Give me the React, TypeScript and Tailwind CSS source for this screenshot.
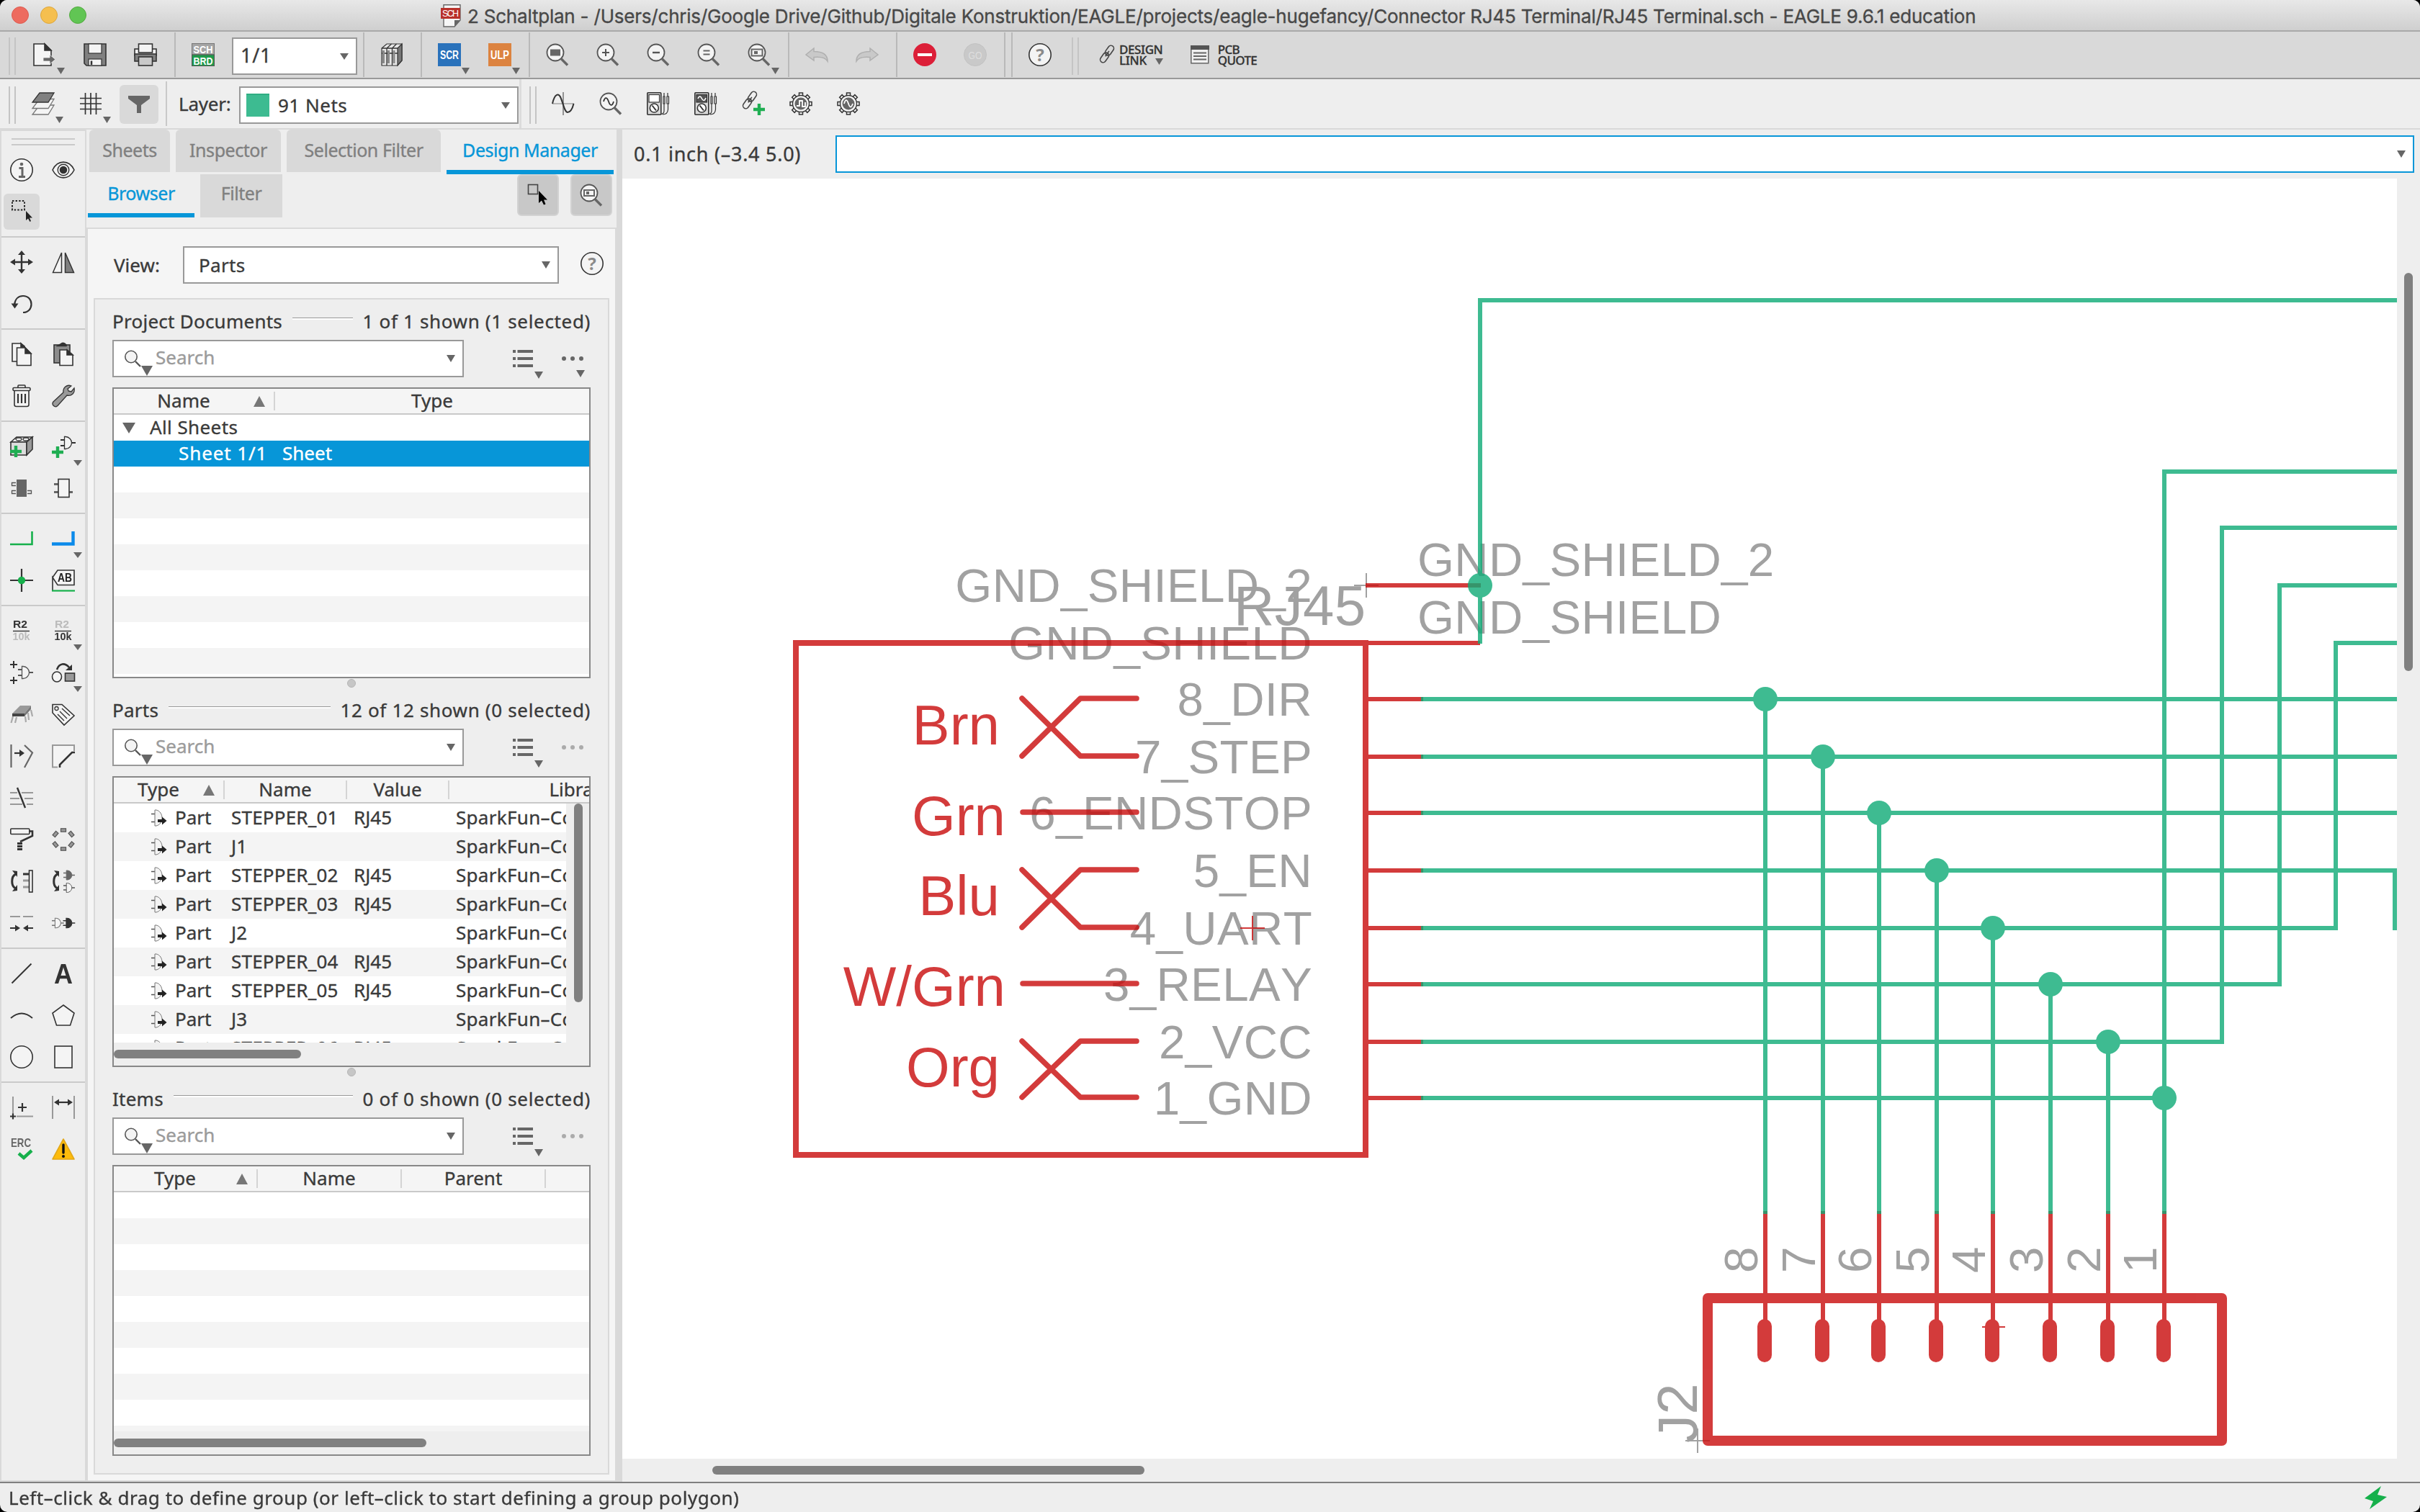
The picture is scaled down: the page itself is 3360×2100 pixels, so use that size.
import React from "react";

type Kids = { children?: React.ReactNode };

/* ---------- primitives ---------- */

function Ic({ children, className = "" }: Kids & { className?: string }) {
  return (
    <svg viewBox="0 0 32 32" fill="none" stroke="#333" strokeWidth="1.6" className={"block size-8 shrink-0 overflow-visible " + className}>
      {children}
    </svg>
  );
}

function Down({ className = "" }: { className?: string }) {
  return (
    <svg viewBox="0 0 12 10" preserveAspectRatio="none" className={"block shrink-0 " + className}>
      <path d="M0 0H12L6 10Z" fill="#666" />
    </svg>
  );
}

function Up() {
  return (
    <svg viewBox="0 0 16 15" className="block h-[15px] w-4 shrink-0">
      <path d="M0 15H16L8 0Z" fill="#777" />
    </svg>
  );
}

function Grip({ className = "" }: { className?: string }) {
  return <div className={"h-[52px] w-[10px] shrink-0 border-x-2 border-[#c4c4c4] " + className} />;
}

function Bar({ className = "" }: { className?: string }) {
  return <div className={"h-[62px] w-0.5 shrink-0 bg-[#b9b9b9] " + className} />;
}

function Tool({ children, menu, className = "" }: Kids & { menu?: boolean; className?: string }) {
  return (
    <div className={"relative size-8 shrink-0 " + className}>
      {children}
      {menu && <Down className="absolute top-[34px] left-[33px] h-[9px] w-[11px]" />}
    </div>
  );
}

/* ---------- shared icon parts ---------- */

function Lens({ children }: Kids) {
  return (
    <Ic>
      <circle cx="13" cy="13" r="11.5" fill="#f4f4f4" stroke="#555" strokeWidth="1.8" />
      <path d="M21 21.500L30 30.500" stroke="#666" strokeWidth="3.4" />
      {children}
    </Ic>
  );
}

function HelpGlyph() {
  return (
    <Ic>
      <circle cx="16" cy="16" r="15.2" fill="#f4f4f4" />
      <text x="16" y="24.500" fontSize="24" fontWeight="700" textAnchor="middle" fill="#8a8a8a" stroke="none" className="font-['Noto_Sans']">?</text>
    </Ic>
  );
}

function Gate({ x = 0, y = 0, fill = "#f4f4f4", s = "#333" }: { x?: number; y?: number; fill?: string; s?: string }) {
  return (
    <g transform={`translate(${x} ${y})`} stroke={s}>
      <path d="M0 -4H6M0 4H6M15 0H21" strokeWidth="1.800" />
      <path d="M5.500 -8.500H7C12 -8.500 15.500 -4 15.500 0S12 8.500 7 8.500H5.500Z" fill={fill} strokeWidth="1.300" />
    </g>
  );
}

function Plus({ x, y }: { x: number; y: number }) {
  return <path d={`M${x - 8} ${y}H${x + 8}M${x} ${y - 8}V${y + 8}`} stroke="#1fae52" strokeWidth="4.4" />;
}

function Chain() {
  return (
    <g stroke="#444" strokeWidth="1.600" transform="rotate(-55 11 11)">
      <rect x="-2.500" y="7" width="15" height="8" rx="4" />
      <rect x="9.500" y="7" width="15" height="8" rx="4" />
      <path d="M7 11H16" />
    </g>
  );
}

function Meter({ wave }: { wave?: boolean }) {
  return (
    <Ic>
      <rect x="0.8" y="0.8" width="19" height="30.400" rx="1" fill="#d8d8d8" />
      <rect x="3" y="3.500" width="14.500" height="10.500" fill={wave ? "#555" : "#fff"} strokeWidth="1.200" />
      {wave && <path d="M5 9C7 4 9 6 10.500 9S14 13 16 8" stroke="#fff" />}
      <circle cx="10.300" cy="22" r="6" fill="#fff" />
      <path d="M7.500 18.500L13 25.500" strokeWidth="2" />
      <path d="M24 1V6M29 1V6M23 6H25V16H23ZM28 6H30.500V16H28ZM24 16V26Q24 30 20 30.500M29.500 16V24Q29 31 22 31" strokeWidth="1.200" />
    </Ic>
  );
}

function Gear({ children }: Kids) {
  return (
    <Ic>
      {[0, 45, 90, 135, 180, 225, 270, 315].map((a) => (
        <path key={a} d="M13.500 5V1H18.500V5" fill="#f4f4f4" strokeWidth="1.500" transform={`rotate(${a} 16 16)`} />
      ))}
      <circle cx="16" cy="16" r="11.500" fill="#f4f4f4" strokeWidth="1.400" />
      <circle cx="16" cy="16" r="8.500" fill="#666" stroke="none" />
      {children}
    </Ic>
  );
}

/* ---------- bars on top ---------- */

function TitleBar() {
  return (
    <div className="flex h-11 shrink-0 items-center border-b-2 border-[#a9a9a9] bg-linear-to-b from-[#e8e8e8] to-[#cfcfcf] pl-4">
      <div className="flex gap-4">
        <div className="size-6 rounded-full border border-[#dc5b50] bg-[#ed6b5f]" />
        <div className="size-6 rounded-full border border-[#dca63c] bg-[#f5bf4f]" />
        <div className="size-6 rounded-full border border-[#52aa3f] bg-[#61c554]" />
      </div>
      <svg viewBox="0 0 28 32" className="mt-0.5 ml-[492px] h-8 w-7 shrink-0">
        <path d="M4 .8H27V22L19 31H4Z" fill="#f6f6f6" stroke="#666" strokeWidth="1.400" />
        <path d="M27 22H19V31Z" fill="#666" />
        <rect x="0" y="5" width="27" height="15" fill="#b9312b" />
        <text x="13.500" y="17" fontSize="12.500" textAnchor="middle" fill="#fff" textLength="23" className="font-['Liberation_Sans']">SCH</text>
      </svg>
      <div className="ml-[9px] pt-[3px] text-[26px] leading-[39px] tracking-[-0.21px] whitespace-pre text-[#484848] font-['Inter',sans-serif]">
        2 Schaltplan - /Users/chris/Google Drive/Github/Digitale Konstruktion/EAGLE/projects/eagle-hugefancy/Connector RJ45 Terminal/RJ45 Terminal.sch - EAGLE 9.6.1 education
      </div>
    </div>
  );
}

function ActionBar() {
  return (
    <div className="flex h-[66px] shrink-0 items-center border-b-2 border-[#999] bg-[#d9d9d9] pl-3">
      <Grip className="mt-1" />
      <Tool menu className="ml-6">
        <Ic>
          <path d="M1 1H16L25 10V31H1Z" fill="#f4f4f4" />
          <path d="M16 1V10H25Z" fill="#333" />
          <path d="M14 20H23V16L31 22.500L23 29V25H14Z" fill="#666" stroke="#f4f4f4" strokeWidth="0.800" />
        </Ic>
      </Tool>
      <Tool className="ml-[38px]">
        <Ic>
          <path d="M1 1H31V31H4L1 28Z" fill="#808080" />
          <rect x="7" y="1" width="18" height="13" fill="#f4f4f4" strokeWidth="1.200" />
          <rect x="7" y="22" width="18" height="9" fill="#f4f4f4" strokeWidth="1.200" />
          <path d="M11 24.500V30" strokeWidth="2.500" />
        </Ic>
      </Tool>
      <Tool className="ml-[38px]">
        <Ic>
          <rect x="1" y="8" width="30" height="9" fill="#f4f4f4" />
          <rect x="1" y="15" width="30" height="10" fill="#808080" />
          <rect x="6.500" y="1" width="19" height="12" fill="#f4f4f4" />
          <rect x="6.500" y="19" width="19" height="12" fill="#c9c9c9" />
        </Ic>
      </Tool>
      <Bar className="ml-6" />
      <Tool className="ml-[22px]">
        <Ic>
          <rect x="0.500" y="0.500" width="31" height="15.500" fill="#a5a5a5" stroke="#777" strokeWidth="1" />
          <rect x="0.500" y="16" width="31" height="15.500" fill="#1f9a4b" stroke="#555" strokeWidth="1" />
          <text x="16" y="13.500" fontSize="14" textAnchor="middle" fill="#fff" stroke="none" textLength="27" lengthAdjust="spacingAndGlyphs" className="font-bold font-['Liberation_Sans']">SCH</text>
          <text x="16" y="29.500" fontSize="14" textAnchor="middle" fill="#fff" stroke="none" textLength="27" lengthAdjust="spacingAndGlyphs" className="font-bold font-['Liberation_Sans']">BRD</text>
        </Ic>
      </Tool>
      <div className="mt-1 ml-6 flex h-[52px] w-[174px] shrink-0 items-center justify-between border-2 border-[#999] bg-white pr-2.5 pl-2.5">
        <span className="pb-0.5 text-[27px] tracking-[0.8px]">1/1</span>
        <Down className="h-[9px] w-3" />
      </div>
      <Bar className="ml-2" />
      <Tool className="ml-[22px]">
        <Ic>
          <path d="M2 7L9 1H30V24L24 31H2Z" fill="#e6e6e6" strokeWidth="1.200" />
          <path d="M24 7L30 1V24L24 31Z" fill="#777" strokeWidth="1.200" />
          <path d="M2 7H24M9 7V31M16.500 7V31M2 14H24M9 7L15.500 1M16.500 7L22.500 1" strokeWidth="1.300" />
          <path d="M4.500 10V28M11.500 10V28M19 10V28" stroke="#888" strokeWidth="3" />
        </Ic>
      </Tool>
      <Bar className="ml-6" />
      <Tool menu className="ml-[22px]">
        <Ic>
          <rect width="32" height="32" fill="#2a72bb" stroke="none" />
          <text x="16" y="22" fontSize="16" textAnchor="middle" fill="#fff" stroke="none" textLength="26" lengthAdjust="spacingAndGlyphs" className="font-bold font-['Liberation_Sans']">SCR</text>
        </Ic>
      </Tool>
      <Tool menu className="ml-[38px]">
        <Ic>
          <rect width="32" height="32" fill="#dc8340" stroke="none" />
          <text x="16" y="22" fontSize="16" textAnchor="middle" fill="#fff" stroke="none" textLength="26" lengthAdjust="spacingAndGlyphs" className="font-bold font-['Liberation_Sans']">ULP</text>
        </Ic>
      </Tool>
      <Bar className="ml-6" />
      <Tool className="ml-[22px]">
        <Lens><rect x="6" y="8.500" width="14" height="9" fill="#666" stroke="none" /></Lens>
      </Tool>
      <Tool className="ml-[38px]">
        <Lens><path d="M8 13H18M13 8V18" stroke="#555" strokeWidth="2" /></Lens>
      </Tool>
      <Tool className="ml-[38px]">
        <Lens><path d="M8 13H18" stroke="#555" strokeWidth="2.400" /></Lens>
      </Tool>
      <Tool className="ml-[38px]">
        <Lens><path d="M8.500 10.500H17.500M8.500 15.500H17.500" stroke="#666" strokeWidth="2" /></Lens>
      </Tool>
      <Tool menu className="ml-[38px]">
        <Lens>
          <rect x="5.500" y="8.500" width="15" height="9" stroke="#666" strokeWidth="2" />
          <rect x="9" y="11" width="5" height="4" fill="#666" stroke="none" />
        </Lens>
      </Tool>
      <Bar className="ml-6" />
      <Tool className="ml-[22px]">
        <Ic><path d="M12 7L1 16L12 24V19.500C22 18.500 28 20 31 25C31 15 24 11.500 12 11.500Z" fill="#c9c9c9" stroke="#b0b0b0" strokeWidth="1.500" /></Ic>
      </Tool>
      <Tool className="ml-[38px]">
        <Ic><path d="M20 7L31 16L20 24V19.500C10 18.500 4 20 1 25C1 15 8 11.500 20 11.500Z" fill="#c9c9c9" stroke="#b0b0b0" strokeWidth="1.500" /></Ic>
      </Tool>
      <Bar className="ml-6" />
      <Tool className="ml-[22px]">
        <Ic>
          <circle cx="16" cy="16" r="16" fill="#dc1f38" stroke="none" />
          <rect x="6" y="14" width="20" height="4" fill="#fff" stroke="none" />
        </Ic>
      </Tool>
      <Tool className="ml-[38px]">
        <Ic>
          <circle cx="16" cy="16" r="15.500" fill="#c9c9c9" stroke="#c2c2c2" strokeWidth="1" />
          <text x="16" y="21.500" fontSize="15" textAnchor="middle" fill="#dedede" stroke="none" textLength="19" lengthAdjust="spacingAndGlyphs" className="font-['Liberation_Sans']">GO</text>
        </Ic>
      </Tool>
      <Bar className="ml-6" />
      <Bar className="ml-2" />
      <Tool className="ml-[22px]"><HelpGlyph /></Tool>
      <Grip className="mt-1 ml-7 w-[9px]" />
      <svg viewBox="0 0 22 24" fill="none" className="ml-7 h-6 w-[22px] shrink-0 overflow-visible"><Chain /></svg>
      <div className="ml-1.5 text-[17px] leading-[15px] font-medium text-[#333] [-webkit-text-stroke:0.3px]">
        <div className="tracking-[-0.4px]">DESIGN</div>
        <div className="flex items-center gap-3 tracking-[-0.3px]">LINK<Down className="mt-1 h-[9px] w-[11px]" /></div>
      </div>
      <svg viewBox="0 0 26 26" className="ml-[38px] h-[26px] w-[26px] shrink-0">
        <rect x="0.800" y="0.800" width="24" height="24" fill="#f0f0f0" stroke="#666" strokeWidth="1.500" />
        <path d="M0 0H26V6H0Z" fill="#555" />
        <path d="M4 10.500H22M4 15H22M4 19.500H22" stroke="#666" strokeWidth="2" />
      </svg>
      <div className="ml-3 text-[17px] leading-[15px] font-medium tracking-[-0.7px] text-[#333] [-webkit-text-stroke:0.3px]">
        <div>PCB</div>
        <div>QUOTE</div>
      </div>
    </div>
  );
}

function LayerBar() {
  return (
    <div className="flex h-[70px] shrink-0 items-center border-b-2 border-[#d9d9d9] bg-[#eee] pl-3">
      <Grip className="mt-1" />
      <Tool menu className="ml-[22px]">
        <Ic>
          <path d="M11 18H31L23 31H1Z" fill="#f4f4f4" stroke="#777" strokeWidth="1.300" />
          <path d="M11 9.500H31L23 22.500H1Z" fill="#f4f4f4" stroke="#777" strokeWidth="1.300" />
          <path d="M11 1H31L23 14H1Z" fill="#808080" strokeWidth="1.300" />
        </Ic>
      </Tool>
      <Tool menu className="ml-[34px]">
        <Ic><path d="M1 8.500H31M1 16H31M1 23.500H31M8.500 1V31M16 1V31M23.500 1V31" strokeWidth="1.700" /></Ic>
      </Tool>
      <div className="mt-0.5 ml-6 grid h-[54px] w-[54px] shrink-0 place-items-center rounded-md bg-[#d9d9d9]">
        <Ic><path d="M1 4H31V8L19 17V28H13V17L1 8Z" fill="#666" stroke="none" /></Ic>
      </div>
      <Bar className="ml-2.5 bg-[#c9c9c9]" />
      <div className="ml-4 w-[84px] shrink-0 text-[26px] tracking-[-0.2px]">Layer:</div>
      <div className="mt-1 flex h-[52px] w-[388px] shrink-0 items-center border-2 border-[#999] bg-white pr-2.5 pl-2">
        <div className="size-8 border-t-2 border-[#2fae83] bg-[#3dbb91]" />
        <div className="ml-3 flex-1 tracking-[0.5px]">91 Nets</div>
        <Down className="h-[9px] w-3" />
      </div>
      <div className="ml-px h-[68px] w-[3px] shrink-0 bg-[#dcdcdc]" />
      <Grip className="mt-1 ml-[11px]" />
      <Tool className="ml-[21px]">
        <Ic>
          <path d="M1 16H31" stroke="#aaa" />
          <path d="M16 0V32" stroke="#555" strokeWidth="1.200" />
          <path d="M1 16C4 2 10 0 13 9C16 16 18 28 22 28C27 28 29 22 30.500 16" strokeWidth="2" />
        </Ic>
      </Tool>
      <Tool className="ml-[34px]">
        <Lens><path d="M6 13C8 6 11 7 13 13S18 20 20 13" stroke="#333" strokeWidth="1.800" /></Lens>
      </Tool>
      <Tool className="ml-[34px]"><Meter /></Tool>
      <Tool className="ml-[34px]"><Meter wave /></Tool>
      <Tool className="ml-[34px]">
        <Ic><Chain /><Plus x={24} y={24} /></Ic>
      </Tool>
      <Tool className="ml-[34px]">
        <Gear><path d="M10 19H14V12H18V20H22V14" stroke="#fff" strokeWidth="1.800" /></Gear>
      </Tool>
      <Tool className="ml-[34px]">
        <Gear><path d="M10 16C12 9 14 10 16 16S20 22 22 16" stroke="#fff" strokeWidth="1.800" /></Gear>
      </Tool>
    </div>
  );
}

/* ---------- command palette on the left ---------- */

function Group({ children }: Kids) {
  return <div className="grid shrink-0 grid-cols-[58px_58px] border-b-2 border-[#cacaca] py-[5px]">{children}</div>;
}

function Cell({ children, menu, active }: Kids & { menu?: boolean; active?: boolean }) {
  return (
    <div className="relative flex h-[58px] items-center justify-center pr-0.5">
      {active ? <div className="grid h-[50px] w-[50px] place-items-center rounded-md bg-[#d9d9d9]">{children}</div> : children}
      {menu && <Down className="absolute top-12 left-[42px] h-2 w-3" />}
    </div>
  );
}

function DualLabel({ a, b }: { a: string; b: string }) {
  return (
    <Ic>
      <text x="14" y="12" fontSize="15" textAnchor="middle" fill={a} stroke="none" textLength="20" lengthAdjust="spacingAndGlyphs" className="font-bold font-['Liberation_Sans']">R2</text>
      <path d="M4 16.500H27" strokeWidth="1.400" />
      <text x="15.500" y="29" fontSize="15" textAnchor="middle" fill={b} stroke="none" textLength="24" lengthAdjust="spacingAndGlyphs" className="font-bold font-['Liberation_Sans']">10k</text>
    </Ic>
  );
}

function Toolbox() {
  return (
    <div className="flex w-[120px] shrink-0 flex-col border-2 border-[#d9d9d9] bg-[#eee]">
      <div className="shrink-0 border-b-2 border-[#cacaca] pt-2.5 pb-[5px]">
        <div className="ml-3.5 h-2.5 w-[88px] border-y-2 border-[#cacaca]" />
        <div className="mt-[5px] grid grid-cols-[58px_58px]">
          <Cell>
            <Ic>
              <circle cx="16" cy="16" r="15.200" fill="#f4f4f4" />
              <circle cx="16" cy="8" r="2.300" fill="#666" stroke="none" />
              <path d="M12.500 13.500H17V25M12 25.500H21" stroke="#666" strokeWidth="3" />
            </Ic>
          </Cell>
          <Cell>
            <Ic>
              <path d="M1 16C8 1.500 24 1.500 31 16C24 30.500 8 30.500 1 16Z" fill="#f4f4f4" />
              <circle cx="16" cy="16" r="7.800" strokeWidth="1.400" />
              <circle cx="16" cy="16" r="4.500" fill="#333" />
            </Ic>
          </Cell>
          <Cell active>
            <Ic>
              <rect x="3" y="1" width="17" height="12.500" stroke="#222" strokeWidth="2" strokeDasharray="2.400 2.200" />
              <path d="M22 15V28L25 25.500L27.500 30L29 29L27 24.500H31Z" fill="#222" stroke="none" />
            </Ic>
          </Cell>
        </div>
      </div>
      <Group>
        <Cell>
          <Ic>
            <path d="M4 16H28M16 4V28" strokeWidth="2.400" />
            <path d="M16 0L21 6H11ZM16 32L21 26H11ZM0 16L7 11.500V20.500ZM32 16L25 11.500V20.500Z" fill="#333" stroke="none" />
          </Ic>
        </Cell>
        <Cell>
          <Ic>
            <path d="M1.500 30.500L13.500 3V30.500Z" fill="#f4f4f4" strokeWidth="1.500" />
            <path d="M30.500 30.500L18.500 3V30.500Z" fill="#808080" strokeWidth="1.500" />
          </Ic>
        </Cell>
        <Cell>
          <Ic>
            <path d="M6 17C7 9 12 5 18 5C25 5 29.500 10 29.500 16.500C29.500 23 25 28 18 28" strokeWidth="2.200" />
            <path d="M1.500 15.500H11.500L6.500 22.500Z" fill="#333" stroke="none" />
          </Ic>
        </Cell>
      </Group>
      <Group>
        <Cell>
          <Ic>
            <path d="M3 1H15L20 5V26H3Z" fill="#f4f4f4" /><path d="M15 1V6H20Z" fill="#333" />
            <path d="M9.500 7H21L29 15V31.500H9.500Z" fill="#f4f4f4" /><path d="M21 7V15H29Z" fill="#333" />
          </Ic>
        </Cell>
        <Cell>
          <Ic>
            <rect x="3" y="3" width="22" height="25" fill="#8c8c8c" /><path d="M8 4.500H20V3Q16 -1.500 12 2Z" fill="#333" />
            <path d="M11 10H21L29 17V31.500H11Z" fill="#f4f4f4" /><path d="M21 10V17H29Z" fill="#333" />
          </Ic>
        </Cell>
        <Cell>
          <Ic>
            <path d="M6 8V28Q6 30.500 8.500 30.500H23.500Q26 30.500 26 28V8" fill="#f4f4f4" />
            <rect x="4" y="4.500" width="24" height="4" rx="1.500" fill="#f4f4f4" /><path d="M11 4V2Q11 1 12 1H20Q21 1 21 2V4" />
            <path d="M11 13V26M16 13V26M21 13V26" strokeWidth="2.200" />
          </Ic>
        </Cell>
        <Cell>
          <Ic><path d="M23 9L27 10L31 5C32.500 12 27 16.500 21 15L8 29.500C4 33 -1 28 2 24L16 11C15 4 21 -0.500 27 2L22 6Z" fill="#999" strokeWidth="1.300" /></Ic>
        </Cell>
      </Group>
      <Group>
        <Cell>
          <Ic>
            <path d="M1 10L9 3H31L23 10Z" fill="#f4f4f4" /><path d="M1 10H23V28H1Z" fill="#dcdcdc" /><path d="M23 10L31 3V20L23 28Z" fill="#999" />
            <ellipse cx="12" cy="6" rx="4" ry="2" fill="#f4f4f4" strokeWidth="1.300" /><ellipse cx="22" cy="6" rx="4" ry="2" fill="#f4f4f4" strokeWidth="1.300" />
            <Plus x={8} y={23} />
          </Ic>
        </Cell>
        <Cell menu><Ic><Gate x={12} y={11} /><Plus x={8} y={24} /></Ic></Cell>
        <Cell>
          <Ic>
            <rect x="9" y="4" width="14" height="24" fill="#666" stroke="none" />
            <path d="M8 8.500H2.500V12.500H8M8 19.500H2.500V23.500H8M24 19.500H29.500V23.500H24" stroke="#555" strokeWidth="1.300" />
          </Ic>
        </Cell>
        <Cell>
          <Ic>
            <path d="M3 10.500H9M3 21.500H9M24 21.500H29" stroke="#666" strokeWidth="3" />
            <rect x="9" y="3.500" width="15" height="25" fill="#f4f4f4" />
          </Ic>
        </Cell>
      </Group>
      <Group>
        <Cell><Ic><path d="M0 24H30.500V6" stroke="#16b04b" strokeWidth="2.600" /></Ic></Cell>
        <Cell menu><Ic><path d="M0 23.500H29.500V6" stroke="#0b8aea" strokeWidth="4.400" /></Ic></Cell>
        <Cell>
          <Ic><path d="M0 16H32M16 0V32" strokeWidth="2.200" /><circle cx="16" cy="16" r="5.200" fill="#16b04b" stroke="none" /></Ic>
        </Cell>
        <Cell>
          <Ic>
            <path d="M1 12L8 2H31V22.500H8L1 12V31" fill="#f4f4f4" />
            <path d="M0 30.500H32" stroke="#16b04b" strokeWidth="2.200" />
            <text x="18" y="18" fontSize="16" textAnchor="middle" fill="#222" stroke="none" textLength="20" lengthAdjust="spacingAndGlyphs" className="font-bold font-['Liberation_Sans']">AB</text>
          </Ic>
        </Cell>
      </Group>
      <Group>
        <Cell><DualLabel a="#333" b="#bbb" /></Cell>
        <Cell menu><DualLabel a="#bbb" b="#333" /></Cell>
        <Cell>
          <Ic><Gate x={11} y={16} s="#555" /><path d="M0 5H10M5 0V10M0 27H10M5 22V32" strokeWidth="2" /></Ic>
        </Cell>
        <Cell menu>
          <Ic>
            <ellipse cx="7" cy="22" rx="6.500" ry="7" fill="#f4f4f4" /><rect x="18.500" y="17" width="13" height="11" fill="#999" />
            <path d="M7 12C10 3 18 2 24 9" strokeWidth="2.600" /><path d="M28 5V13H19Z" fill="#333" stroke="none" />
          </Ic>
        </Cell>
        <Cell>
          <Ic>
            <path d="M3 15L14 4H29L20 15Z" fill="#999" stroke="none" /><path d="M3 15H20V19H3Z" fill="#444" stroke="none" /><path d="M20 15L29 4V9L20 19Z" fill="#777" stroke="none" />
            <path d="M4 19L1.500 28M9 20L7 28M21 19L22 27M25 14L26 24M29 10L31 19" stroke="#aaa" strokeWidth="2.200" />
          </Ic>
        </Cell>
        <Cell>
          <Ic>
            <path d="M1 2.500H14L31 18L17 31L1 14Z" fill="#f4f4f4" /><circle cx="6.500" cy="8" r="2.500" strokeWidth="1.300" />
            <path d="M14 8L25 18M11 12L21 22M8 16L17 25" strokeWidth="1.400" />
          </Ic>
        </Cell>
        <Cell>
          <Ic>
            <path d="M1.500 0V32M20 1L31 11.500L20 32" stroke="#666" strokeWidth="2.200" /><path d="M6 12H15" strokeWidth="2.200" /><path d="M13 7L20 12L13 17Z" fill="#333" stroke="none" />
          </Ic>
        </Cell>
        <Cell>
          <Ic>
            <path d="M8 31.500H1V1H31V9" fill="#f4f4f4" stroke="#999" strokeWidth="2" /><path d="M11 32V28L28 11H32" strokeWidth="2.600" />
          </Ic>
        </Cell>
        <Cell>
          <Ic><path d="M0 9H10M16 9H32M0 17H13M20 17H32M0 25H17M23 25H32" stroke="#999" strokeWidth="2" /><path d="M10 2L21 30" strokeWidth="2.400" /></Ic>
        </Cell>
        <Cell />
        <Cell>
          <Ic>
            <rect x="0.800" y="1" width="26" height="7.500" rx="1" fill="#f4f4f4" /><path d="M27 4.500H31V11L14 19" strokeWidth="2.600" />
            <path d="M10 21.500H17M10 25.500H17M10 29.500H17" strokeWidth="3" />
          </Ic>
        </Cell>
        <Cell>
          <Ic>
            {[[16, 3, 0], [27, 8.5, 50], [27, 23, -50], [16, 29, 0], [5, 23, 50], [5, 8.5, -50]].map(([x, y, a], i) => (
              <rect key={i} x={x - 3.5} y={y - 2.2} width="7" height="4.400" fill="#999" stroke="#555" strokeWidth="1.200" transform={`rotate(${a} ${x} ${y})`} />
            ))}
          </Ic>
        </Cell>
        <Cell>
          <Ic>
            <path d="M8 6C1 9 1 23 8 26" strokeWidth="3" /><path d="M3 1L10 2V10ZM3 30L10 29V21Z" fill="#333" stroke="none" />
            <path d="M18 6H26" strokeWidth="3" /><path d="M18 15H26M18 24H26" stroke="#999" strokeWidth="3" /><rect x="26.500" y="1" width="4.500" height="30" fill="#f4f4f4" />
          </Ic>
        </Cell>
        <Cell>
          <Ic>
            <path d="M8 6C1 9 1 23 8 26" strokeWidth="3" /><path d="M3 1L10 2V10ZM3 30L10 29V21Z" fill="#333" stroke="none" />
            <g transform="translate(16 7.500) scale(.76)"><Gate fill="#666" s="#666" /></g><g transform="translate(16 25) scale(.76)"><Gate s="#555" /></g>
          </Ic>
        </Cell>
        <Cell>
          <Ic>
            <path d="M0 7H14M18 7H32" stroke="#999" strokeWidth="2" /><path d="M0 23H9M23 23H32" strokeWidth="2.200" /><path d="M14 23L7 18.500V27.500ZM18 23L25 18.500V27.500Z" fill="#333" stroke="none" />
          </Ic>
        </Cell>
        <Cell>
          <Ic>
            <g transform="translate(0 16) scale(.8)"><Gate s="#777" /></g><g transform="translate(15.500 16) scale(.8)"><Gate fill="#333" /></g>
          </Ic>
        </Cell>
      </Group>
      <Group>
        <Cell><Ic><path d="M2.500 29.500L29.500 2.500" strokeWidth="2" /></Ic></Cell>
        <Cell><Ic><text x="16" y="29.500" fontSize="38" textAnchor="middle" fill="#333" stroke="none" textLength="26" lengthAdjust="spacingAndGlyphs" className="font-bold font-['Liberation_Sans']">A</text></Ic></Cell>
        <Cell><Ic><path d="M1 20Q16 7 31 20" strokeWidth="2" /></Ic></Cell>
        <Cell><Ic><path d="M16 2L31 13L25.500 30H6.500L1 13Z" fill="#f4f4f4" /></Ic></Cell>
        <Cell><Ic><circle cx="16" cy="16" r="15.200" fill="#f4f4f4" /></Ic></Cell>
        <Cell><Ic><rect x="4" y="1" width="24" height="30" fill="#f4f4f4" /></Ic></Cell>
      </Group>
      <div className="grid grid-cols-[58px_58px] pt-[5px]">
        <Cell><Ic><path d="M4 1V25M9 28.500H32" stroke="#999" strokeWidth="2" /><path d="M0 28.500H8M4 24.500V32.500M11 16H23M17 10V22" strokeWidth="2.200" /></Ic></Cell>
        <Cell>
          <Ic><path d="M1 0V32M31 0V32" stroke="#999" strokeWidth="2" /><path d="M6 9H26" strokeWidth="2.200" /><path d="M3 9L10 4.500V13.500ZM29 9L22 4.500V13.500Z" fill="#333" stroke="none" /></Ic>
        </Cell>
        <Cell>
          <Ic>
            <text x="15" y="13" fontSize="17" textAnchor="middle" fill="#666" stroke="none" textLength="28" lengthAdjust="spacingAndGlyphs" className="font-bold font-['Liberation_Sans']">ERC</text>
            <path d="M12 22L19 28L30 18" stroke="#16b04b" strokeWidth="4.400" />
          </Ic>
        </Cell>
        <Cell>
          <Ic>
            <path d="M16 2L31 30H1Z" fill="#fdbb0b" stroke="#e2a81a" strokeLinejoin="round" /><path d="M16 10V21" stroke="#111" strokeWidth="3.400" strokeLinecap="round" /><circle cx="16" cy="26" r="2" fill="#111" stroke="none" />
          </Ic>
        </Cell>
      </div>
    </div>
  );
}

/* ---------- design manager ---------- */

function SectionHead({ title, count, moreEnabled }: { title: string; count: string; moreEnabled?: boolean }) {
  return (
    <>
      <div className="flex h-[34px] items-center whitespace-nowrap">
        <div className="tracking-[0.25px]">{title}</div>
        <div className="-mt-2 mr-[14px] ml-[14px] h-[3px] flex-1 border-t border-[#999] bg-white" />
        <div className="tracking-[0.66px]">{count}</div>
      </div>
      <div className="mt-[9px] flex h-[52px]">
        <div className="flex w-[488px] shrink-0 items-center border-2 border-[#999] bg-white pr-2.5 pl-[15px]">
          <div className="relative h-full w-[43px]">
            <svg viewBox="0 0 24 24" fill="none" stroke="#555" className="absolute top-[12px] left-0 size-6">
              <circle cx="9" cy="9.500" r="8.200" fill="#f4f4f4" strokeWidth="1.600" />
              <path d="M15 16L22 23" strokeWidth="2.400" />
            </svg>
            <Down className="absolute top-[34px] left-[23px] h-[14px] w-4" />
          </div>
          <div className="flex-1 pb-1 text-[#9b9b9b]">Search</div>
          <Down className="h-2.5 w-3" />
        </div>
        <div className="relative ml-[68px] w-7">
          <svg viewBox="0 0 28 26" className="mt-[13px] h-[26px] w-7">
            <path d="M0 3H4M0 13H4M0 23H4M6.500 3H28M6.500 13H28M6.500 23H28" stroke="#666" strokeWidth="4.200" />
          </svg>
          <Down className="absolute top-[44px] left-[30px] h-[10px] w-3" />
        </div>
        <div className="relative ml-10 flex w-8 items-center gap-1.5">
          {[0, 1, 2].map((i) => (
            <div key={i} className={moreEnabled ? "size-1.5 rounded-full bg-[#666]" : "size-1.5 rounded-full bg-[#ababab]"} />
          ))}
          {moreEnabled && <Down className="absolute top-[42px] left-5 h-[10px] w-3" />}
        </div>
      </div>
    </>
  );
}

function Col({ children, sort, className = "" }: Kids & { sort?: boolean; className?: string }) {
  return (
    <div className={"flex shrink-0 items-center border-[#d4d4d4] " + className}>
      <div className="flex-1 pb-0.5 text-center">{children}</div>
      {sort && <Up />}
    </div>
  );
}

function Stripes({ n }: { n: number }) {
  return (
    <>
      {Array.from({ length: n }, (_, i) => (
        <div key={i} className={i % 2 ? "h-9 shrink-0 bg-[#f4f4f4]" : "h-9 shrink-0 bg-white"} />
      ))}
    </>
  );
}

function Sash() {
  return <div className="mx-auto mt-px size-3 rounded-full border border-[#b5b5b5] bg-[#c6c6c6]" />;
}

const PARTS: [string, string][] = [
  ["STEPPER_01", "RJ45"], ["J1", ""], ["STEPPER_02", "RJ45"], ["STEPPER_03", "RJ45"], ["J2", ""],
  ["STEPPER_04", "RJ45"], ["STEPPER_05", "RJ45"], ["J3", ""], ["STEPPER_06", "RJ45"],
];

function DesignManager() {
  const head = "flex h-9 shrink-0 items-center overflow-hidden border-b-2 border-[#c9c9c9] bg-[#f5f5f5] whitespace-nowrap";
  const idle = "grid h-[59px] place-items-center rounded-t-md bg-[#d9d9d9] pb-1 text-[#808080]";
  return (
    <div className="flex w-[736px] shrink-0 flex-col bg-[#eee]">
      <div className="flex h-[62px] shrink-0 gap-2 pl-1 text-[25px] tracking-[-0.45px]">
        <div className={idle + " w-28"}>Sheets</div>
        <div className={idle + " w-[146px]"}>Inspector</div>
        <div className={idle + " w-[214px]"}>Selection Filter</div>
        <div className="grid h-[62px] w-[232px] place-items-center border-b-6 border-[#0796d8] text-[#0796d8]">Design Manager</div>
      </div>
      <div className="flex h-[60px] shrink-0 pl-0.5 text-[25px] tracking-[-0.45px]">
        <div className="grid w-[148px] place-items-center border-b-6 border-[#0796d8] pb-0.5 text-[#0796d8]">Browser</div>
        <div className="ml-2 grid w-[114px] place-items-center bg-[#d9d9d9] pb-2 text-[#808080]">Filter</div>
        <div className="ml-[326px] grid size-[58px] place-items-center rounded-md border-2 border-[#d2d2d2] bg-[#c8c8c8]">
          <Ic>
            <rect x="2.500" y="1.500" width="13" height="13" stroke="#444" />
            <path d="M17 10V27L21 23.500L24 29.500L26.500 28.500L24 22.500H29Z" fill="#000" stroke="none" />
          </Ic>
        </div>
        <div className="ml-4 grid size-[58px] place-items-center rounded-md border-2 border-[#d2d2d2] bg-[#c8c8c8]">
          <Lens>
            <rect x="6" y="9" width="14" height="8" stroke="#666" strokeWidth="2" />
            <rect x="9" y="11" width="4" height="4" fill="#666" stroke="none" />
          </Lens>
        </div>
      </div>
      <div className="mt-3.5 flex min-h-0 flex-1 flex-col border-2 border-[#d9d9d9] bg-[#f5f5f5] pt-6">
        <div className="flex h-[52px] shrink-0 items-center">
          <div className="w-[132px] pl-9">View:</div>
          <div className="flex h-[52px] w-[522px] items-center justify-between border-2 border-[#999] bg-white pr-[10px] pl-5">
            <span className="tracking-[0.3px]">Parts</span>
            <Down className="h-2.5 w-3" />
          </div>
          <div className="-mt-1 ml-[30px]"><HelpGlyph /></div>
        </div>

        <div className="mx-2 mt-5 mb-2 min-h-0 flex-1 border-2 border-[#d9d9d9] bg-[#eee] px-6 pt-[13px]">
          <div className="h-[540px]">
            <SectionHead title="Project Documents" count="1 of 1 shown (1 selected)" moreEnabled />
            <div className="mt-[14px] flex h-[404px] flex-col overflow-hidden border-2 border-[#888] bg-white">
              <div className={head}>
                <Col sort className="h-[26px] w-[224px] border-r-2 pr-3">Name</Col>
                <Col className="w-[436px]">Type</Col>
              </div>
              <div className="flex h-9 shrink-0 items-center pl-3">
                <Down className="h-[15px] w-[18px]" />
                <span className="ml-5 pb-0.5 tracking-[0.4px]">All Sheets</span>
              </div>
              <div className="flex h-9 shrink-0 items-center bg-[#0796d8] pb-0.5 text-white">
                <span className="w-[234px] pl-[90px] tracking-[0.9px]">Sheet 1/1</span>
                <span>Sheet</span>
              </div>
              <Stripes n={8} />
            </div>
            <Sash />
          </div>

          <div className="h-[540px]">
            <SectionHead title="Parts" count="12 of 12 shown (0 selected)" />
            <div className="mt-[14px] flex h-[404px] flex-col overflow-hidden border-2 border-[#888] bg-[#eee]">
              <div className={head}>
                <Col sort className="h-[26px] w-[154px] border-r-2 pr-3">Type</Col>
                <Col className="h-[26px] w-[170px] border-r-2">Name</Col>
                <Col className="h-[26px] w-[142px] border-r-2">Value</Col>
                <Col className="w-[362px]">Library</Col>
              </div>
              <div className="flex h-[332px] shrink-0">
                <div className="flex w-[628px] flex-col overflow-hidden">
                  {PARTS.map(([name, value], i) => (
                    <div key={i} className={(i % 2 ? "bg-[#f4f4f4]" : "bg-white") + " flex h-10 shrink-0 items-center overflow-hidden pb-0.5 whitespace-nowrap"}>
                      <svg viewBox="0 0 24 24" fill="none" className="mt-0.5 ml-[51px] size-6 shrink-0">
                        <path d="M1 6.500H6M1 17.500H6" stroke="#555" strokeWidth="1.600" />
                        <path d="M6 1H8C13 2 16 7 16 12C16 17 13 22 8 23H6Z" fill="#f4f4f4" stroke="#777" />
                        <path d="M10 14H16V10.500L22.500 16L16 21.500V18H10Z" fill="#222" />
                      </svg>
                      <span className="ml-2.5 w-[78px] shrink-0">Part</span>
                      <span className="w-[170px] shrink-0 tracking-[0.2px]">{name}</span>
                      <span className="w-[142px] shrink-0">{value}</span>
                      <span className="tracking-[0.3px]">SparkFun–Connectors</span>
                    </div>
                  ))}
                </div>
                <div className="flex w-8 justify-center pl-0.5"><div className="h-[276px] w-3 rounded-full bg-[#808080]" /></div>
              </div>
              <div className="flex h-8 shrink-0 items-center"><div className="h-3 w-[260px] rounded-full bg-[#808080]" /></div>
            </div>
            <Sash />
          </div>

          <SectionHead title="Items" count="0 of 0 shown (0 selected)" />
          <div className="mt-[14px] flex h-[404px] flex-col overflow-hidden border-2 border-[#888] bg-[#eee]">
            <div className={head}>
              <Col sort className="h-[26px] w-[200px] border-r-2 pr-3">Type</Col>
              <Col className="h-[26px] w-[200px] border-r-2">Name</Col>
              <Col className="h-[26px] w-[200px] border-r-2">Parent</Col>
            </div>
            <div className="flex h-[332px] shrink-0 flex-col overflow-hidden"><Stripes n={10} /></div>
            <div className="flex h-8 shrink-0 items-center"><div className="h-3 w-[434px] rounded-full bg-[#808080]" /></div>
          </div>
        </div>
      </div>
    </div>
  );
}

/* ---------- schematic ---------- */

const PINS: { label: string; y: number; col: number }[] = [
  { label: "8_DIR", y: 971, col: 2451 },
  { label: "7_STEP", y: 1051, col: 2531 },
  { label: "6_ENDSTOP", y: 1129, col: 2609 },
  { label: "5_EN", y: 1209, col: 2689 },
  { label: "4_UART", y: 1289, col: 2767 },
  { label: "3_RELAY", y: 1367, col: 2847 },
  { label: "2_VCC", y: 1447, col: 2927 },
  { label: "1_GND", y: 1525, col: 3005 },
];
const PIN_END = [3330, 3330, 3330, 3325, 3243, 3165, 3085, 3005];

const WIRE_NAMES: [string, number, number][] = [
  ["Brn", 1034, 1388], ["Grn", 1160, 1396], ["Blu", 1271, 1388], ["W/Grn", 1397, 1396], ["Org", 1509, 1388],
];

function Schematic() {
  return (
    <svg viewBox="864 248 2464 1778" className="block h-[1778px] w-[2464px] shrink-0 bg-white font-['Liberation_Sans',sans-serif]">
      <g opacity="0.8" fill="#8a8a8a" fontSize="65.500" stroke="none" letterSpacing="0.35" className="[font-kerning:none]">
        <text x="1822" y="836" textAnchor="end">GND_SHIELD_2</text>
        <text x="1822" y="916" textAnchor="end">GND_SHIELD</text>
        {PINS.map((p) => (
          <text key={p.label} x="1822" y={p.y + 22.5} textAnchor="end">{p.label}</text>
        ))}
        <text x="1968" y="800">GND_SHIELD_2</text>
        <text x="1968" y="880">GND_SHIELD</text>
        <text x="1713" y="868" fontSize="78">RJ45</text>
        {PINS.map((p, i) => (
          <text key={p.col} transform={`translate(${p.col - 11} 1768) rotate(-90)`}>{8 - i}</text>
        ))}
        <text transform="translate(2356 2004) rotate(-90)" fontSize="78">J2</text>
        <path d="M1880 813H1914M1897 796V830M2340 2001H2374M2357 1984V2018" stroke="#8a8a8a" strokeWidth="2" shapeRendering="crispEdges" />
      </g>

      <g opacity="0.8" fill="none" stroke="#c80b0b" strokeWidth="6">
        <g shapeRendering="crispEdges">
          <path d="M1105 893V1604M1896 893V1604" strokeWidth="8" />
          <path d="M1101 893H1900M1101 1604H1900" strokeWidth="8" />
          <path d="M1896 813H2056M1896 893H2055" />
          {PINS.map((p) => (
            <path key={p.y} d={`M1896 ${p.y}H1976M${p.col} 1682V1840`} />
          ))}
          <path d="M1722 1289H1756M1739 1272V1306M2752 1843H2784" strokeWidth="2" />
        </g>
        <g strokeWidth="7.500" strokeLinecap="round" strokeLinejoin="round">
          {[[970, 1050], [1208, 1288], [1446, 1524]].map(([a, b]) => (
            <path key={a} d={`M1419 ${a}L1500 ${b}H1578M1419 ${b}L1500 ${a}H1578`} />
          ))}
          <path d="M1420 1128H1578M1420 1366H1578" />
        </g>
        <rect x="2371" y="1803" width="714" height="198" strokeWidth="14" strokeLinejoin="round" />
        {PINS.map((p) => (
          <path key={p.col} d={`M${p.col - 1} 1842V1882`} strokeWidth="20" strokeLinecap="round" />
        ))}
        <g fill="#c80b0b" stroke="none" fontSize="78" textAnchor="end">
          {WIRE_NAMES.map(([t, y, x]) => (
            <text key={t} x={x} y={y}>{t}</text>
          ))}
        </g>
      </g>

      <g opacity="0.8" fill="none" stroke="#0eaa76" strokeWidth="6">
        <g shapeRendering="crispEdges">
          <path d="M3330 417H2055V894" />
          {PINS.map((p, i) => (
            <path key={p.y} d={`M1973 ${p.y}H${PIN_END[i]}M${p.col} ${p.y}V1686`} />
          ))}
          <path d="M3330 655H3005V1525M3330 733H3085V1450M3330 813H3165V1370M3330 893H3243V1292" />
          <path d="M3325 1206V1289H3330" />
        </g>
        <g fill="#0eaa76" stroke="none">
          <circle cx="2055" cy="813" r="17" />
          {PINS.map((p) => (
            <circle key={p.y} cx={p.col} cy={p.y} r="17" />
          ))}
        </g>
      </g>
    </svg>
  );
}

function Editor() {
  return (
    <div className="flex min-w-0 flex-1 flex-col bg-[#eee]">
      <div className="flex h-[68px] shrink-0 items-center">
        <div className="w-[296px] shrink-0 pl-4 text-[27px] tracking-[0.72px]">0.1 inch (–3.4 5.0)</div>
        <div className="flex h-[52px] w-[2192px] items-center justify-end border-2 border-[#0796d8] bg-white pr-2.5">
          <Down className="h-2.5 w-3" />
        </div>
      </div>
      <div className="flex h-[1778px] shrink-0">
        <Schematic />
        <div className="flex flex-1 pl-2.5"><div className="mt-[131px] h-[553px] w-3 rounded-full bg-[#808080]" /></div>
      </div>
      <div className="flex flex-1 items-center"><div className="ml-[125px] h-3 w-[600px] rounded-full bg-[#808080]" /></div>
    </div>
  );
}

export default function App() {
  return (
    <div className="h-[2100px] w-[3360px] bg-black">
      <div className="flex h-full w-full flex-col overflow-hidden rounded-[10px] bg-[#eee] text-[26px] leading-[34px] text-[#3a3a3a] font-['Noto_Sans',sans-serif] [-webkit-text-stroke:0.35px]">
        <TitleBar />
        <ActionBar />
        <LayerBar />
        <div className="flex min-h-0 flex-1">
          <Toolbox />
          <DesignManager />
          <div className="w-2 shrink-0 bg-[#d9d9d9]" />
          <Editor />
        </div>
        <div className="flex h-[42px] shrink-0 items-center justify-between border-t-2 border-[#808080] pr-[46px] pl-3">
          <div className="tracking-[0.54px]">Left–click &amp; drag to define group (or left–click to start defining a group polygon)</div>
          <svg viewBox="0 0 32 32" className="h-8 w-8">
            <path d="M24 0L1 17L13 21L8 32L32 15L19 12Z" fill="#16b04b" />
          </svg>
        </div>
      </div>
    </div>
  );
}
